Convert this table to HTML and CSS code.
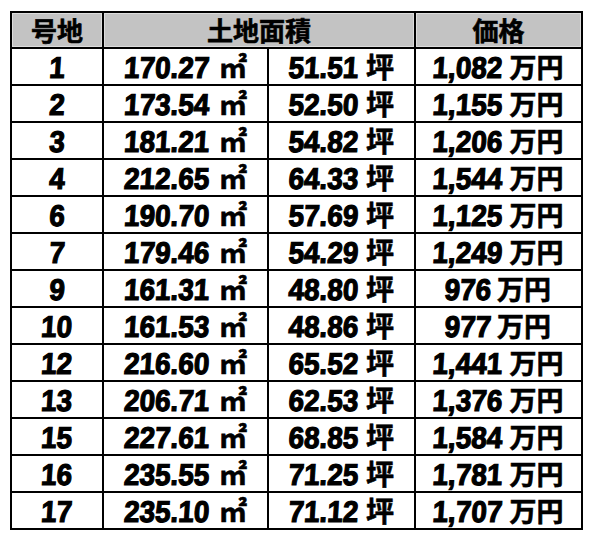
FILE: index.html
```html
<!DOCTYPE html>
<html lang="ja">
<head>
<meta charset="utf-8">
<title>号地一覧</title>
<link rel="stylesheet" href="styles.css">
</head>
<body>
<div class="sheet">
  <div class="hd">号地</div>
  <div class="hd span2">土地面積</div>
  <div class="hd">価格</div>

  <div class="c"><span class="n">1</span></div><div class="c"><span class="n">170.27</span><span class="u m2">㎡</span></div><div class="c"><span class="n">51.51</span><span class="u tsubo">坪</span></div><div class="c"><span class="n">1,082</span><span class="u yen">万円</span></div>
  <div class="c"><span class="n">2</span></div><div class="c"><span class="n">173.54</span><span class="u m2">㎡</span></div><div class="c"><span class="n">52.50</span><span class="u tsubo">坪</span></div><div class="c"><span class="n">1,155</span><span class="u yen">万円</span></div>
  <div class="c"><span class="n">3</span></div><div class="c"><span class="n">181.21</span><span class="u m2">㎡</span></div><div class="c"><span class="n">54.82</span><span class="u tsubo">坪</span></div><div class="c"><span class="n">1,206</span><span class="u yen">万円</span></div>
  <div class="c"><span class="n">4</span></div><div class="c"><span class="n">212.65</span><span class="u m2">㎡</span></div><div class="c"><span class="n">64.33</span><span class="u tsubo">坪</span></div><div class="c"><span class="n">1,544</span><span class="u yen">万円</span></div>
  <div class="c"><span class="n">6</span></div><div class="c"><span class="n">190.70</span><span class="u m2">㎡</span></div><div class="c"><span class="n">57.69</span><span class="u tsubo">坪</span></div><div class="c"><span class="n">1,125</span><span class="u yen">万円</span></div>
  <div class="c"><span class="n">7</span></div><div class="c"><span class="n">179.46</span><span class="u m2">㎡</span></div><div class="c"><span class="n">54.29</span><span class="u tsubo">坪</span></div><div class="c"><span class="n">1,249</span><span class="u yen">万円</span></div>
  <div class="c"><span class="n">9</span></div><div class="c"><span class="n">161.31</span><span class="u m2">㎡</span></div><div class="c"><span class="n">48.80</span><span class="u tsubo">坪</span></div><div class="c"><span class="n">976</span><span class="u yen">万円</span></div>
  <div class="c"><span class="n">10</span></div><div class="c"><span class="n">161.53</span><span class="u m2">㎡</span></div><div class="c"><span class="n">48.86</span><span class="u tsubo">坪</span></div><div class="c"><span class="n">977</span><span class="u yen">万円</span></div>
  <div class="c"><span class="n">12</span></div><div class="c"><span class="n">216.60</span><span class="u m2">㎡</span></div><div class="c"><span class="n">65.52</span><span class="u tsubo">坪</span></div><div class="c"><span class="n">1,441</span><span class="u yen">万円</span></div>
  <div class="c"><span class="n">13</span></div><div class="c"><span class="n">206.71</span><span class="u m2">㎡</span></div><div class="c"><span class="n">62.53</span><span class="u tsubo">坪</span></div><div class="c"><span class="n">1,376</span><span class="u yen">万円</span></div>
  <div class="c"><span class="n">15</span></div><div class="c"><span class="n">227.61</span><span class="u m2">㎡</span></div><div class="c"><span class="n">68.85</span><span class="u tsubo">坪</span></div><div class="c"><span class="n">1,584</span><span class="u yen">万円</span></div>
  <div class="c"><span class="n">16</span></div><div class="c"><span class="n">235.55</span><span class="u m2">㎡</span></div><div class="c"><span class="n">71.25</span><span class="u tsubo">坪</span></div><div class="c"><span class="n">1,781</span><span class="u yen">万円</span></div>
  <div class="c"><span class="n">17</span></div><div class="c"><span class="n">235.10</span><span class="u m2">㎡</span></div><div class="c"><span class="n">71.12</span><span class="u tsubo">坪</span></div><div class="c"><span class="n">1,707</span><span class="u yen">万円</span></div>
</div>
</body>
</html>
```

FILE: styles.css
```css
html, body {
  margin: 0;
  padding: 0;
  background: #ffffff;
}

.sheet {
  margin: 11px 0 0 10px;
  width: 573px;
  box-sizing: border-box;
  display: grid;
  grid-template-columns: 90px 163px 145px 165px;
  grid-template-rows: 34px repeat(13, 35px);
  gap: 2px;
  padding: 2px;
  background: #000000;
  color: #000000;
}

.hd {
  background: #c3c3c3;
  box-shadow: inset 0 0 0 1px #dcdcdc;
  font-family: "Noto Sans CJK JP", "Noto Sans", sans-serif;
  font-weight: 700;
  font-size: 26px;
  line-height: 34px;
  text-align: center;
  -webkit-text-stroke: 0.6px #000;
}

.span2 {
  grid-column: span 2;
}

.c {
  background: #ffffff;
  font-family: "Liberation Sans", Arial, sans-serif;
  font-weight: 700;
  font-size: 30px;
  line-height: 35px;
  text-align: center;
  white-space: nowrap;
}

.n {
  display: inline-block;
  letter-spacing: 0;
  transform: scaleX(0.93) skewX(-4deg);
  -webkit-text-stroke: 1.2px #000;
  line-height: 35px;
  padding-top: 1px;
  vertical-align: top;
  margin: 0 -3px;
}

.u {
  display: inline-block;
  font-family: "Noto Sans CJK JP", sans-serif;
  font-weight: 700;
  line-height: 35px;
  vertical-align: top;
  -webkit-text-stroke: 0.6px #000;
}

.m2 {
  font-size: 28px;
  margin-left: 9px;
}

.tsubo {
  font-size: 28px;
  margin-left: 8px;
}

.yen {
  font-size: 27px;
  margin-left: 7px;
}
```
